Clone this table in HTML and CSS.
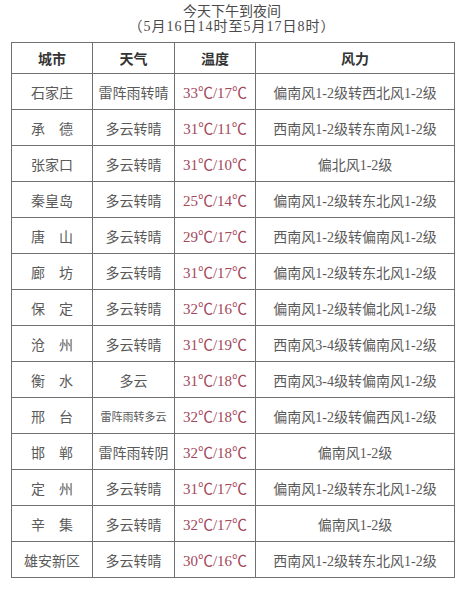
FILE: index.html
```html
<!DOCTYPE html>
<html lang="zh">
<head>
<meta charset="utf-8">
<link rel="stylesheet" href="styles.css">
</head>
<body>
<div class="page">
  <div class="title">
    <div class="t1">今天下午到夜间</div>
    <div class="t2">（5月16日14时至5月17日8时）</div>
  </div>
  <table class="wx">
    <colgroup><col class="c1"><col class="c2"><col class="c3"><col class="c4"></colgroup>
    <thead>
      <tr><th>城市</th><th>天气</th><th>温度</th><th>风力</th></tr>
    </thead>
    <tbody>
      <tr><td>石家庄</td><td>雷阵雨转晴</td><td class="temp">33℃/17℃</td><td>偏南风1-2级转西北风1-2级</td></tr>
      <tr><td>承　德</td><td>多云转晴</td><td class="temp">31℃/11℃</td><td>西南风1-2级转东南风1-2级</td></tr>
      <tr><td>张家口</td><td>多云转晴</td><td class="temp">31℃/10℃</td><td>偏北风1-2级</td></tr>
      <tr><td>秦皇岛</td><td>多云转晴</td><td class="temp">25℃/14℃</td><td>偏南风1-2级转东北风1-2级</td></tr>
      <tr><td>唐　山</td><td>多云转晴</td><td class="temp">29℃/17℃</td><td>西南风1-2级转偏南风1-2级</td></tr>
      <tr><td>廊　坊</td><td>多云转晴</td><td class="temp">31℃/17℃</td><td>偏南风1-2级转东北风1-2级</td></tr>
      <tr><td>保　定</td><td>多云转晴</td><td class="temp">32℃/16℃</td><td>偏南风1-2级转偏北风1-2级</td></tr>
      <tr><td>沧　州</td><td>多云转晴</td><td class="temp">31℃/19℃</td><td>西南风3-4级转偏南风1-2级</td></tr>
      <tr><td>衡　水</td><td>多云</td><td class="temp">31℃/18℃</td><td>西南风3-4级转偏南风1-2级</td></tr>
      <tr><td>邢　台</td><td class="small">雷阵雨转多云</td><td class="temp">32℃/18℃</td><td>偏南风1-2级转偏西风1-2级</td></tr>
      <tr><td>邯　郸</td><td>雷阵雨转阴</td><td class="temp">32℃/18℃</td><td>偏南风1-2级</td></tr>
      <tr><td>定　州</td><td>多云转晴</td><td class="temp">31℃/17℃</td><td>偏南风1-2级转东北风1-2级</td></tr>
      <tr><td>辛　集</td><td>多云转晴</td><td class="temp">32℃/17℃</td><td>偏南风1-2级</td></tr>
      <tr><td>雄安新区</td><td>多云转晴</td><td class="temp">30℃/16℃</td><td>西南风1-2级转东北风1-2级</td></tr>
    </tbody>
  </table>
</div>
</body>
</html>
```

FILE: styles.css
```css
html, body {
  margin: 0;
  padding: 0;
  background: #ffffff;
}
.page {
  width: 464px;
  height: 600px;
  font-family: "Liberation Serif", "Noto Sans CJK SC", serif;
  color: #555555;
  -webkit-font-smoothing: antialiased;
}
.title {
  text-align: center;
  padding-top: 4px;
  color: #4a4a4a;
  font-size: 14px;
  line-height: 15px;
}
.t2 {
  letter-spacing: 1px;
}
.wx {
  margin: 8px 0 0 11px;
  width: 443px;
  border-collapse: collapse;
  table-layout: fixed;
  border: 1.5px solid #707070;
}
.c1 { width: 81px; }
.c2 { width: 82px; }
.c3 { width: 81px; }
.c4 { width: 199px; }
.wx th, .wx td {
  border: 1.5px solid #707070;
  text-align: center;
  padding: 0;
  white-space: nowrap;
  overflow: hidden;
}
.wx th {
  height: 30px;
  font-size: 14px;
  font-weight: 700;
  color: #333333;
}
.wx td {
  height: 35px;
  font-size: 14px;
  color: #5a5a5a;
}
.wx td.temp {
  color: #a3485a;
  font-size: 15px;
  letter-spacing: 0px;
}
.wx td.small {
  font-size: 11px;
}
```
